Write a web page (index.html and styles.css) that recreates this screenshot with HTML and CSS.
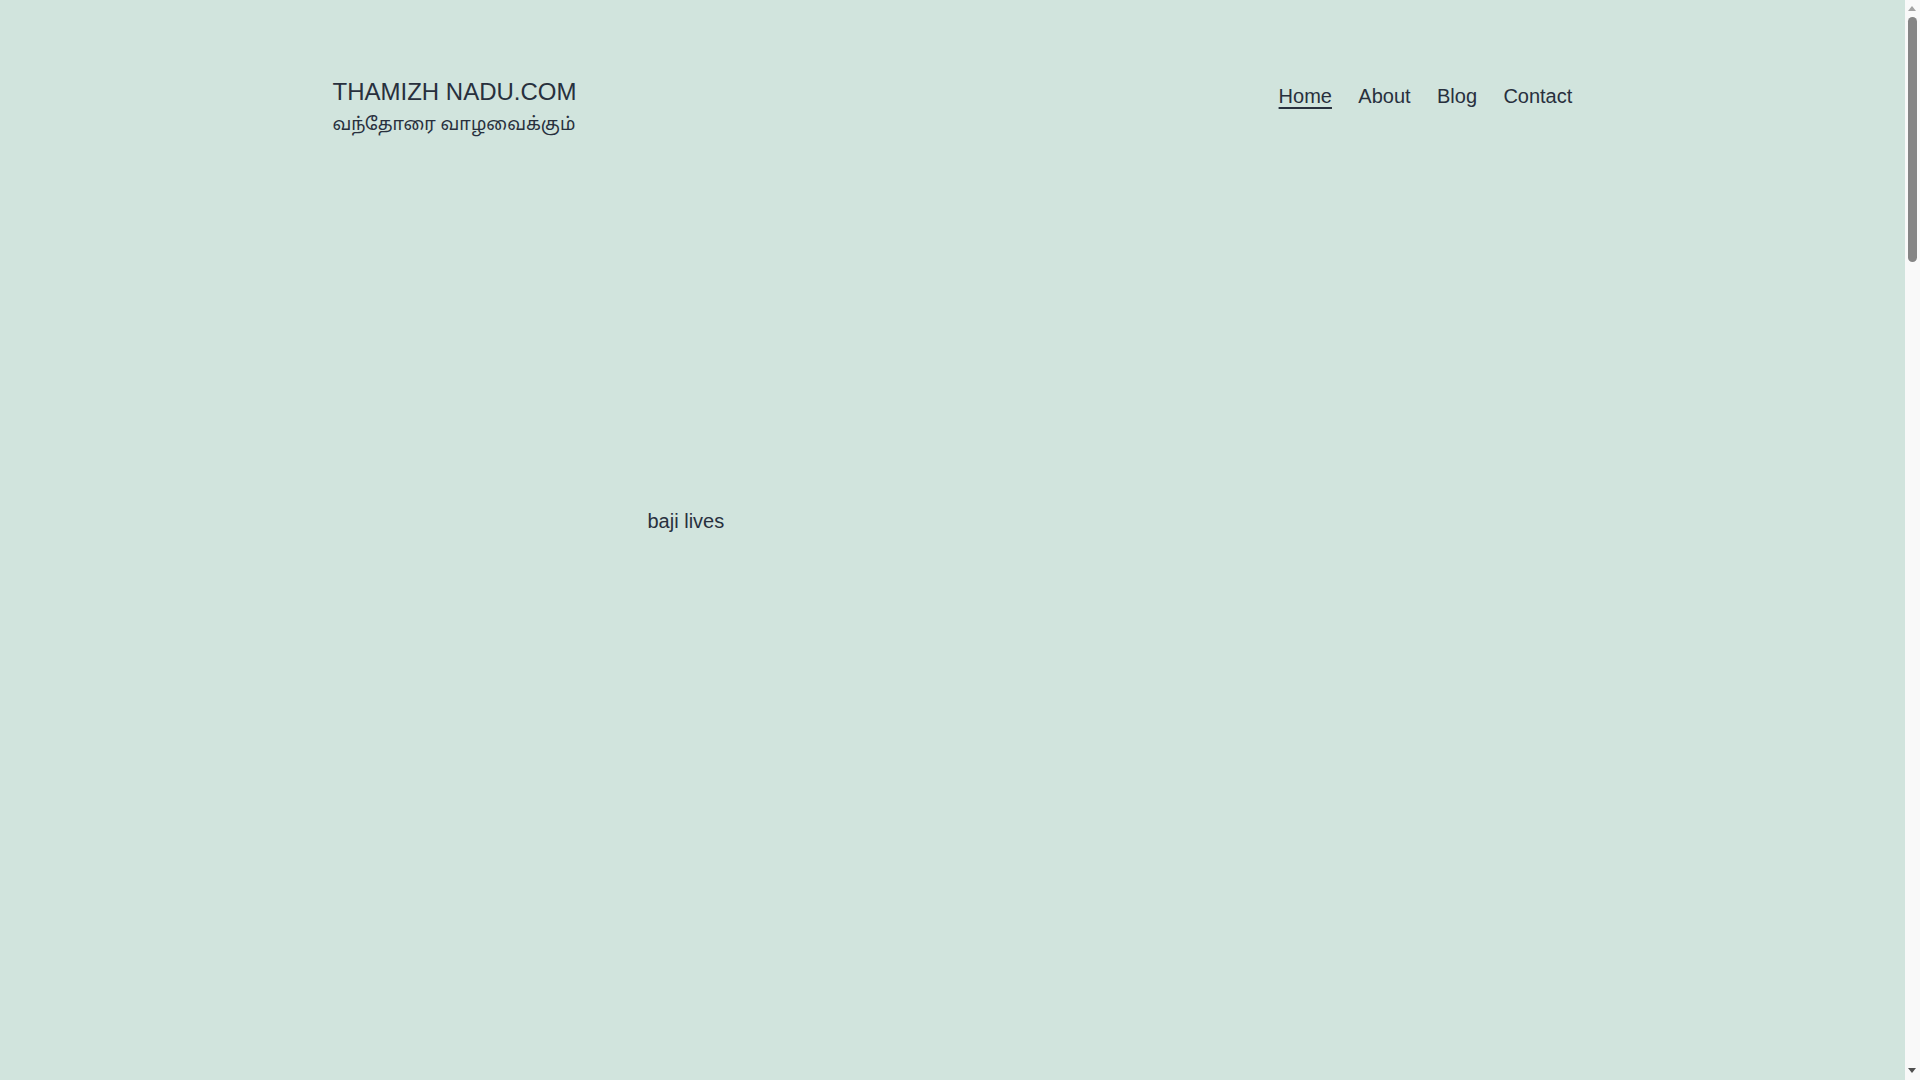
FILE: index.html
```html
<!DOCTYPE html>
<html lang="en">
<head>
    <meta charset="UTF-8">
    <meta name="viewport" content="width=device-width, initial-scale=1.0">
    <title>THAMIZH NADU.COM</title>
    <link rel="stylesheet" href="styles.css">
</head>
<body>
    <div class="site">
        <!-- Header: branding + primary menu -->
        <header class="site-header">
            <div class="site-branding">
                <p class="site-title"><a href="#">THAMIZH NADU.COM</a></p>
                <p class="site-description">வந்தோரை வாழவைக்கும்</p>
            </div>
            <nav class="primary-nav">
                <ul class="menu">
                    <li><a href="#" class="current">Home</a></li>
                    <li><a href="#">About</a></li>
                    <li><a href="#">Blog</a></li>
                    <li><a href="#">Contact</a></li>
                </ul>
            </nav>
        </header>

        <!-- Page content -->
        <main class="site-main">
            <div class="entry-content">
                <p>baji lives</p>
            </div>
        </main>
    </div>

    <!-- Window scrollbar -->
    <div class="scrollbar">
        <span class="arrow arrow-up"></span>
        <span class="thumb"></span>
        <span class="arrow arrow-down"></span>
    </div>
</body>
</html>
```

FILE: styles.css
```css
html {
    background-color: #d1e4dd;
}

body {
    margin: 0;
    padding: 0;
    background-color: #d1e4dd;
    color: #28303d;
    font-family: 'Liberation Sans', Arial, sans-serif;
    font-size: 20px;
    line-height: 1.7;
    overflow: hidden;
}

a {
    color: #28303d;
}

.site {
    width: calc(100% - 15px);
    height: 100vh;
}

/* Header */
.site-header {
    width: 1240px;
    margin: 0 auto;
    padding-top: 76px;
    display: flex;
    justify-content: space-between;
    align-items: flex-start;
}

.site-branding p {
    margin: 0;
}

.site-title {
    font-size: 24px;
    line-height: 1.3;
    text-transform: uppercase;
}

.site-title a {
    text-decoration: none;
}

.site-description {
    margin-top: 6px !important;
    font-size: 18px;
    line-height: 1.4;
    font-family: 'Noto Sans Tamil', 'Lohit Tamil', 'Liberation Sans', sans-serif;
}

/* Primary menu */
.primary-nav {
    margin-top: 4px;
    margin-right: -13px;
}

.menu {
    list-style: none;
    margin: 0;
    padding: 0;
    display: flex;
}

.menu a {
    display: block;
    padding: 3px 13.2px;
    font-size: 20px;
    line-height: 1.3;
    text-decoration: none;
}

.menu a.current {
    text-decoration: underline;
    text-decoration-thickness: 2px;
    text-underline-offset: 4px;
}

/* Content */
.site-main {
    padding-top: 366px;
}

.entry-content {
    width: 610px;
    margin: 0 auto;
}

.entry-content p {
    margin: 0;
}

/* Scrollbar */
.scrollbar {
    position: fixed;
    top: 0;
    right: 0;
    width: 15px;
    height: 100vh;
    background: #f9f9f9;
}

.arrow {
    position: absolute;
    left: 3px;
    width: 0;
    height: 0;
    border-left: 4.5px solid transparent;
    border-right: 4.5px solid transparent;
}

.arrow-up {
    top: 6px;
    border-bottom: 5px solid #a3a3a3;
}

.arrow-down {
    bottom: 7px;
    border-top: 5px solid #505050;
}

.thumb {
    position: absolute;
    top: 17px;
    left: 3px;
    width: 9px;
    height: 245px;
    border-radius: 5px;
    background: #858585;
}
```
